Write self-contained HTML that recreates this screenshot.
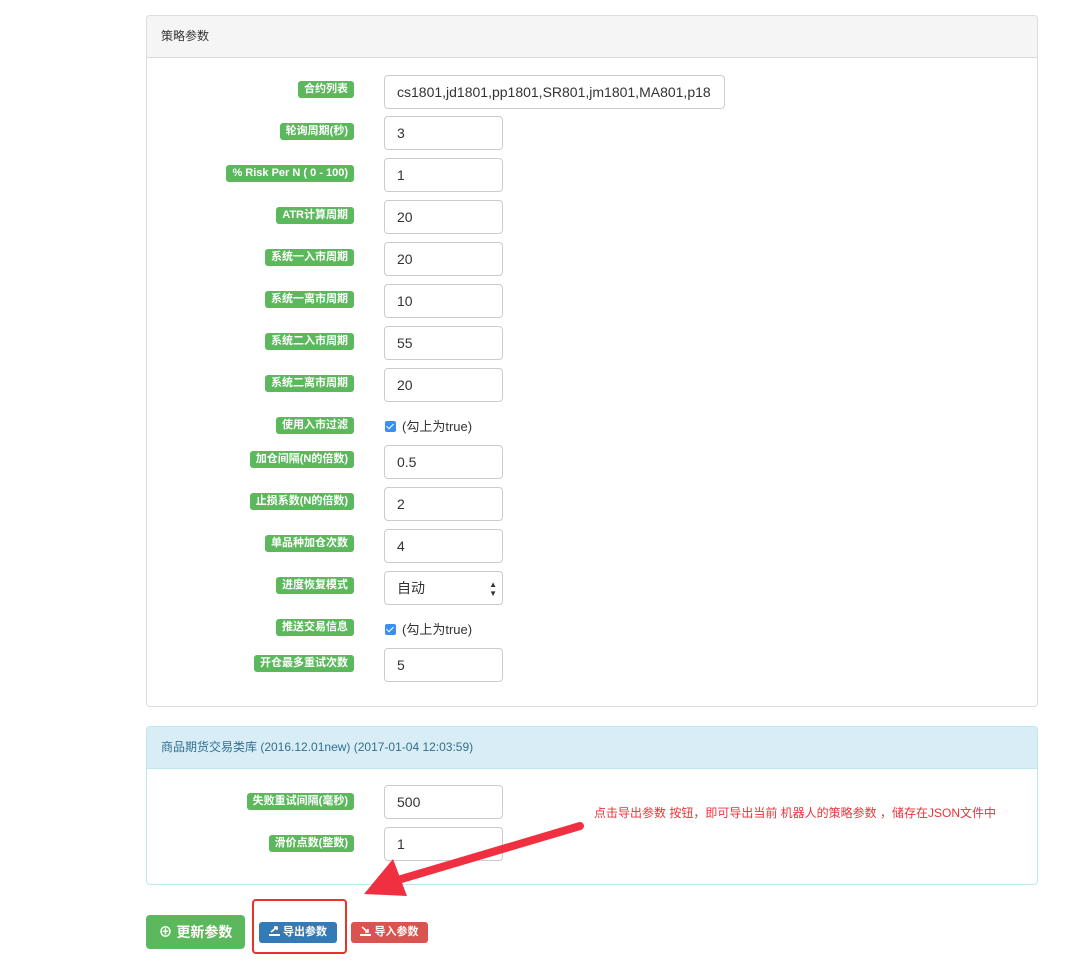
<!DOCTYPE html>
<html><head><meta charset="utf-8"><style>
*{box-sizing:border-box;margin:0;padding:0}
body{width:1091px;height:962px;background:#fff;position:relative;overflow:hidden;font-family:"Liberation Sans","Noto Sans CJK SC",sans-serif;color:#333}
.abs{position:absolute}
.panel{position:absolute;left:146px;width:892px;border:1px solid #ddd;border-radius:4px}
.ph{height:42px;border-bottom:1px solid #ddd;background:#f5f5f5;font-size:12px;padding:0 14px;line-height:41px;border-radius:3px 3px 0 0}
.lab{position:absolute;right:737px;height:17px;line-height:17px;background:#5cb85c;color:#fff;font-weight:bold;font-size:11px;padding:0 6px;border-radius:3px;white-space:nowrap}
.inp{position:absolute;left:384px;width:119px;height:34px;border:1px solid #ccc;border-radius:4px;font-size:14px;line-height:32px;padding-left:12px;color:#333;background:#fff}
.chk{position:absolute;left:385px;font-size:13px;line-height:14px}
.chk i{display:inline-block;width:11px;height:11px;background:#3b8ff3;border-radius:2px;vertical-align:-1px;margin-right:6px;position:relative}
.chk i:after{content:"";position:absolute;left:3px;top:1px;width:3px;height:6px;border:solid #fff;border-width:0 1.5px 1.5px 0;transform:rotate(45deg)}
.btn{position:absolute;color:#fff;font-weight:bold;border-radius:3px;white-space:nowrap}
</style></head><body>
<div class="panel" style="top:15px;height:692px"><div class="ph">策略参数</div></div>
<div class="panel" style="top:726px;height:159px;border-color:#bce8f1"><div class="ph" style="background:#d9edf7;color:#31708f;border-color:#bce8f1">商品期货交易类库 (2016.12.01new) (2017-01-04 12:03:59)</div></div>

<div class="lab" style="top:81px">合约列表</div>
<div class="inp" style="top:75px;width:341px">cs1801,jd1801,pp1801,SR801,jm1801,MA801,p18</div>
<div class="lab" style="top:123px">轮询周期(秒)</div><div class="inp" style="top:116px">3</div>
<div class="lab" style="top:165px">% Risk Per N ( 0 - 100)</div><div class="inp" style="top:158px">1</div>
<div class="lab" style="top:207px">ATR计算周期</div><div class="inp" style="top:200px">20</div>
<div class="lab" style="top:249px">系统一入市周期</div><div class="inp" style="top:242px">20</div>
<div class="lab" style="top:291px">系统一离市周期</div><div class="inp" style="top:284px">10</div>
<div class="lab" style="top:333px">系统二入市周期</div><div class="inp" style="top:326px">55</div>
<div class="lab" style="top:375px">系统二离市周期</div><div class="inp" style="top:368px">20</div>
<div class="lab" style="top:417px">使用入市过滤</div><div class="chk" style="top:420px"><i></i>(勾上为true)</div>
<div class="lab" style="top:451px">加仓间隔(N的倍数)</div><div class="inp" style="top:445px">0.5</div>
<div class="lab" style="top:493px">止损系数(N的倍数)</div><div class="inp" style="top:487px">2</div>
<div class="lab" style="top:535px">单品种加仓次数</div><div class="inp" style="top:529px">4</div>
<div class="lab" style="top:577px">进度恢复模式</div><div class="inp" style="top:571px">自动<span style="position:absolute;right:5px;top:0;font-size:8px;line-height:9px;padding-top:8px">▲<br>▼</span></div>
<div class="lab" style="top:619px">推送交易信息</div><div class="chk" style="top:623px"><i></i>(勾上为true)</div>
<div class="lab" style="top:655px">开仓最多重试次数</div><div class="inp" style="top:648px">5</div>

<div class="lab" style="top:793px">失败重试间隔(毫秒)</div><div class="inp" style="top:785px">500</div>
<div class="lab" style="top:835px">滑价点数(整数)</div><div class="inp" style="top:827px">1</div>

<div class="abs" style="left:594px;top:804px;font-size:12px;color:#e8333a;white-space:nowrap">点击导出参数 按钮，即可导出当前 机器人的策略参数 ，储存在JSON文件中</div>
<svg class="abs" style="left:0;top:0" width="1091" height="962"><line x1="580" y1="826" x2="398" y2="880" stroke="#f03040" stroke-width="8" stroke-linecap="round"/><polygon points="364,894 393,859 407,896" fill="#f03040"/></svg>
<div class="abs" style="left:252px;top:899px;width:95px;height:55px;border:2px solid #e8332a;border-radius:4px"></div>

<div class="btn" style="left:146px;top:915px;width:99px;height:34px;background:#5cb85c;font-size:14px;line-height:34px;text-align:center;border-radius:4px">⊕ 更新参数</div>
<div class="btn" style="left:259px;top:922px;width:78px;height:21px;background:#337ab7;font-size:11px;line-height:21px;text-align:center"><svg width="11" height="10" style="vertical-align:-1px"><rect x="0" y="8" width="11" height="2" fill="#fff"/><path d="M2 6 L8 1 M5 1 H8 V4" stroke="#fff" stroke-width="1.6" fill="none"/></svg> 导出参数</div>
<div class="btn" style="left:351px;top:922px;width:77px;height:21px;background:#d9534f;font-size:11px;line-height:21px;text-align:center"><svg width="11" height="10" style="vertical-align:-1px"><rect x="0" y="8" width="11" height="2" fill="#fff"/><path d="M2 1 L8 6 M5 6 H8 V3" stroke="#fff" stroke-width="1.6" fill="none"/></svg> 导入参数</div>
</body></html>
